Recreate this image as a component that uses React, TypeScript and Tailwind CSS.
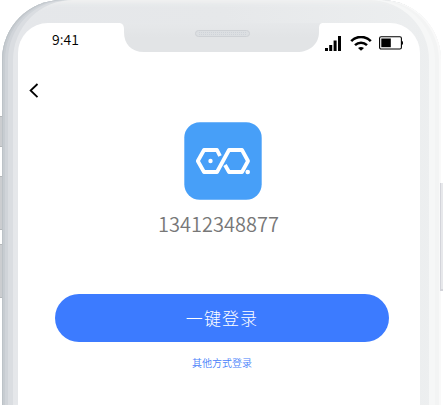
import React from "react";

const SignalIcon: React.FC = () => (
  <svg width="16" height="15" viewBox="0 0 16 15" fill="#000">
    <rect x="0" y="12" width="3" height="3" />
    <rect x="4.2" y="9" width="3" height="6" />
    <rect x="8.6" y="4.5" width="3" height="10.5" />
    <rect x="13" y="0" width="3" height="15" />
  </svg>
);

const WifiIcon: React.FC = () => (
  <svg width="22" height="16" viewBox="0 0 22 16" fill="none">
    <path d="M1.2 5.1C6.8 -.4 15.2 -.4 20.8 5.1" stroke="#000" strokeWidth="2.6" />
    <path d="M5 9.2C8.5 5.9 13.5 5.9 17 9.2" stroke="#000" strokeWidth="2.5" />
    <path d="M8 12Q11 9.8 14 12L11 14.8Z" fill="#000" />
  </svg>
);

const BatteryIcon: React.FC = () => (
  <svg width="25" height="14" viewBox="0 0 25 14" fill="none">
    <rect x="0.6" y="0.7" width="21.8" height="12.3" rx="1.5" stroke="#000" strokeWidth="1.1" />
    <rect x="2.3" y="2.5" width="9.5" height="8.7" fill="#000" />
    <path d="M22.8 4.8C24.4 5.3 24.4 8.7 22.8 9.2Z" fill="#000" />
  </svg>
);

const AppLogo: React.FC = () => (
  <svg width="78" height="78" viewBox="0 0 78 78" fill="none">
    <rect x="0.3" y="0.3" width="77.4" height="77.4" rx="15.5" fill="#479ff8" />
    <g stroke="#fff" strokeWidth="3.8" strokeLinejoin="round">
      <path d="M36 34L33 28H20L13.8 39L20 50H33L45 28H58L64 39L58 50H45L41 43" />
    </g>
    <circle cx="26.5" cy="39" r="2.2" fill="#fff" />
    <circle cx="63.7" cy="50" r="2.3" fill="#fff" />
  </svg>
);

const LoginScreen: React.FC = () => (
  <div className="flex h-full flex-col">
    {/* Status bar */}
    <div className="flex h-[55px] items-start justify-between pr-[16px] pl-[34px]">
      <span className="pt-[6px] text-sm leading-[20px] font-[350] text-black">9:41</span>
      <div className="flex items-start pt-[13px]">
        <SignalIcon />
        <div className="ml-[9px]">
          <WifiIcon />
        </div>
        <div className="ml-[7px]">
          <BatteryIcon />
        </div>
      </div>
    </div>

    {/* Back */}
    <button type="button" className="ml-[11px] h-[22px] w-[12px] pt-[4px]">
      <svg width="10" height="16" viewBox="0 0 10 16" fill="none">
        <path d="M8.5 1L1.6 7.5L8.5 14.2" stroke="#000" strokeWidth="1.8" />
      </svg>
    </button>

    <div className="flex flex-col items-center pt-[22px] pl-[6px]">
      <div className="pl-[2px]">
        <AppLogo />
      </div>
      <p className="mt-[9px] pr-[7px] text-xl leading-[30px] font-[350] text-[#777]">
        13412348877
      </p>
      <button
        type="button"
        className="mt-[55px] h-[48px] w-[334px] rounded-full bg-[#3c7bff] text-[17px] font-light tracking-[1.1px] text-white"
      >
        一键登录
      </button>
      <button
        type="button"
        className="mt-[13px] text-[10px] leading-[15px] font-[350] text-[#4780fa]"
      >
        其他方式登录
      </button>
    </div>
  </div>
);

const Notch: React.FC = () => (
  <svg width="204" height="29" viewBox="0 0 204 29" fill="none">
    <defs>
      <linearGradient id="notch" x1="0" y1="0" x2="0" y2="1">
        <stop offset="0" stopColor="#e6e8ea" />
        <stop offset="0.5" stopColor="#e2e4e6" />
      </linearGradient>
    </defs>
    <path
      d="M0 0C3 0 5 2 5 6V9C5 21 12 29 25 29H178C191 29 200 21 200 9V6C200 2 201 0 204 0Z"
      fill="url(#notch)"
    />
    <rect x="76.5" y="7.5" width="54" height="6" rx="3" fill="#dcdfe2" stroke="#ced1d5" />
    <path d="M80 9.5H128M80 11.5H128" stroke="#cfd3d9" strokeWidth="1" strokeDasharray="1 1" />
  </svg>
);

export default function App() {
  return (
    <div className="relative h-[406px] w-[443px] overflow-hidden bg-white font-['Noto_Sans_CJK_SC',sans-serif]">
      {/* Side buttons */}
      <div className="absolute top-[116px] left-[-2px] h-[31px] w-[5px] rounded-[1px] border-y border-[#b5b8ba] bg-[#cbcdd0]" />
      <div className="absolute top-[176px] left-[-2px] h-[54px] w-[5px] rounded-[1px] border-y border-[#b5b8ba] bg-[#cbcdd0]" />
      <div className="absolute top-[244px] left-[-2px] h-[54px] w-[5px] rounded-[1px] border-y border-[#b5b8ba] bg-[#cbcdd0]" />

      {/* Phone body */}
      <div className="relative ml-[2px] h-[405px] w-[439px] rounded-t-[60px] bg-linear-to-r from-[#e5e7ea] via-[#e6e8ea] to-[#edeff0] pt-[23px] pr-[21px] pl-[16px] shadow-[inset_1px_0_0_#bcc2c7,inset_3px_0_0_#c7ccd1,inset_6px_0_0_#d0d4d9,inset_11px_0_0_#dadde1,inset_-2px_0_0_#f9f9f9,inset_-6px_0_0_#f3f4f4,inset_-12px_0_0_#f6f7f7,inset_0_3px_4px_#f0f1f1]">
        <div className="h-full rounded-t-[30px] bg-white">
          <LoginScreen />
        </div>
        <div className="absolute top-[23px] left-[117px]">
          <Notch />
        </div>
      </div>

      <div className="absolute top-[183px] left-[440px] h-[108px] w-[5px] border-b-2 border-l border-[#d3d4da] bg-[#e7e8eb]" />
    </div>
  );
}
